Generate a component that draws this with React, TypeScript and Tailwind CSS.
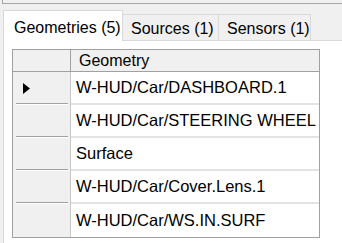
import React from "react";

const rows = [
  "W-HUD/Car/DASHBOARD.1",
  "W-HUD/Car/STEERING WHEEL",
  "Surface",
  "W-HUD/Car/Cover.Lens.1",
  "W-HUD/Car/WS.IN.SURF",
];

export default function App() {
  return (
    <div
      className="w-[342px] h-[243px] overflow-hidden bg-[#f0f0f0] text-black text-[16px] leading-none"
      style={{ fontFamily: '"Liberation Sans", Arial, sans-serif' }}
    >
      <div className="h-[4px] ml-[2px] border-l border-b border-[#a8a8a8]" />
      <div className="mt-[6px] flex items-end h-[30px] pl-[3px]">
        <div className="relative z-10 -mb-px h-[31px] w-[120px] bg-white border border-b-0 border-[#d9d9d9] pl-[10px] pt-[9px]">
          Geometries (5)
        </div>
        <div className="h-[26px] w-[96px] bg-[#f0f0f0] border-t border-r border-[#d9d9d9] pl-[8px] pt-[6px]">
          Sources (1)
        </div>
        <div className="h-[26px] w-[92px] bg-[#f0f0f0] border-t border-r border-[#d9d9d9] pl-[8px] pt-[6px]">
          Sensors (1)
        </div>
      </div>
      <div className="ml-[3px] h-[220px] bg-white border-t border-l border-[#d9d9d9] pl-[8px] pt-[8px]">
        <div className="w-[308px] border border-[#a0a0a0] bg-white">
          <div className="flex h-[22px] bg-[#f0f0f0] border-b border-[#a0a0a0]">
            <div className="w-[58px] border-r border-[#a0a0a0]" />
            <div className="flex-1 pl-[8px] flex items-center">Geometry</div>
          </div>
          {rows.map((r, i) => (
            <div key={r} className="flex h-[33px]">
              <div className="w-[58px] bg-[#f0f0f0] border-r border-[#c8c8c8] relative flex items-center pl-[10px]">
                {i === 0 && (
                  <svg width="7" height="11" viewBox="0 0 7 11">
                    <path d="M0 0 L7 5.5 L0 11 Z" fill="#000" />
                  </svg>
                )}
                {i < rows.length - 1 && (
                  <div className="absolute left-[3px] right-[2px] bottom-0 h-[2px] border-b border-white bg-[#a0a0a0]" />
                )}
              </div>
              <div
                className={
                  "flex-1 flex items-center pl-[5px] text-[16.5px] " +
                  (i < rows.length - 1 ? "border-b-2 border-[#e3e3e3]" : "")
                }
              >
                {r}
              </div>
            </div>
          ))}
        </div>
      </div>
    </div>
  );
}
